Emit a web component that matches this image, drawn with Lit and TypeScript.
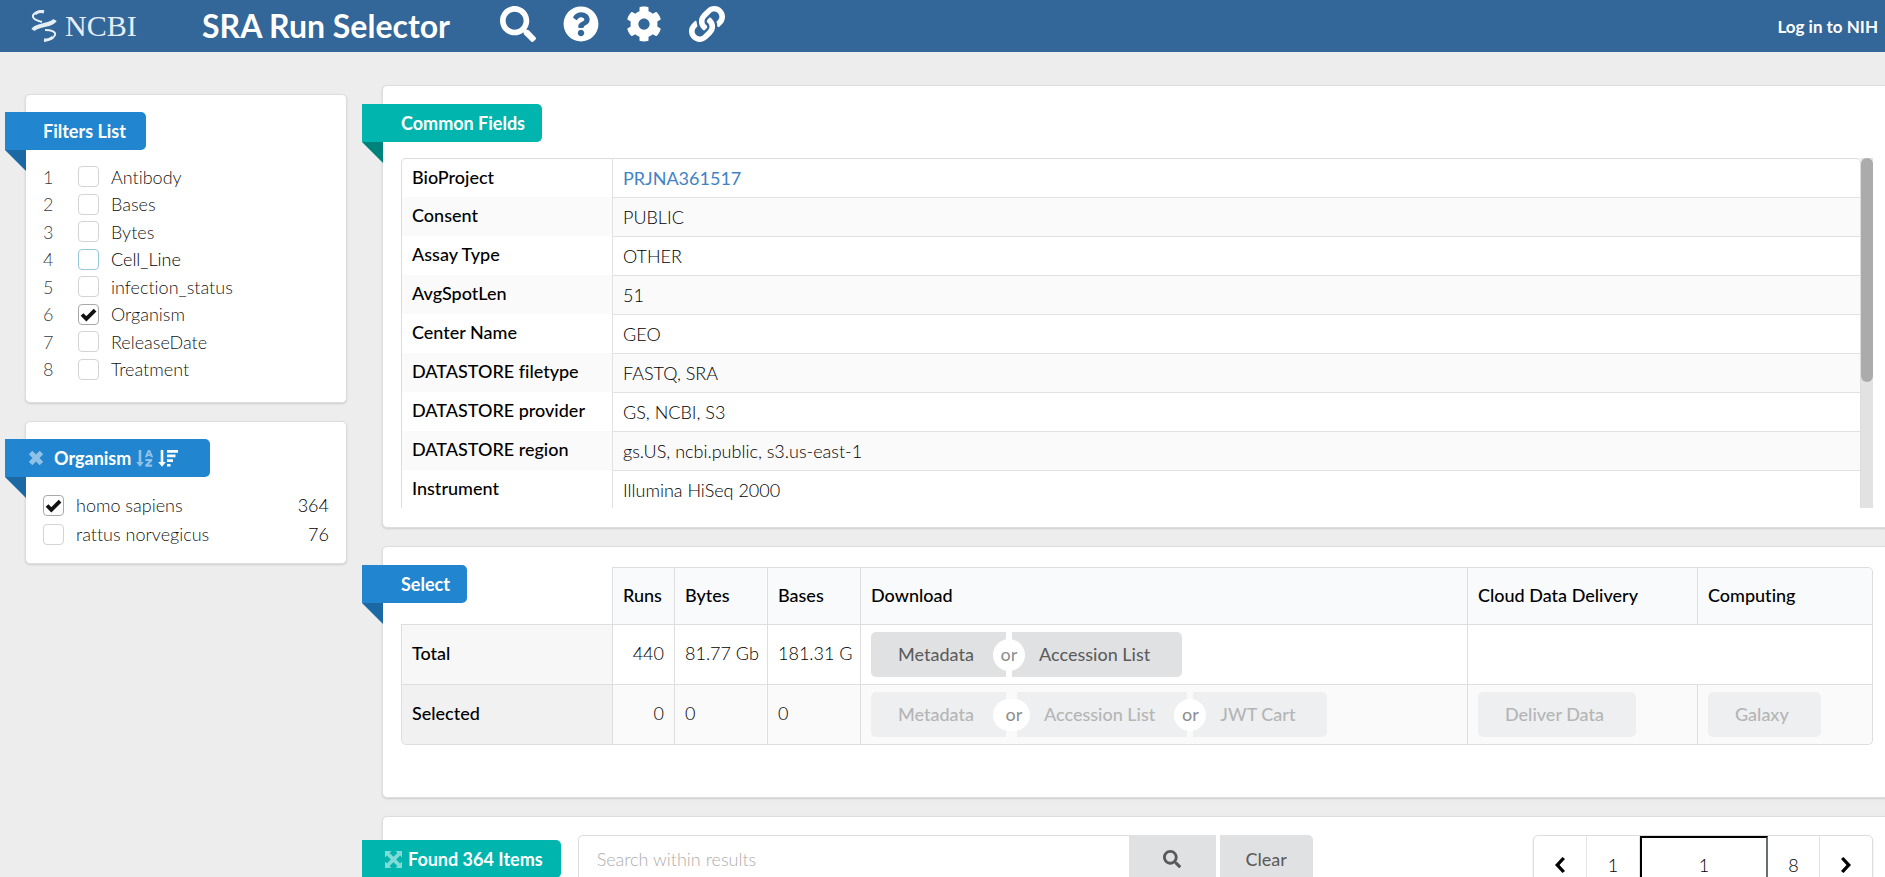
import { LitElement, html, css, svg } from "lit";
import { customElement, property } from "lit/decorators.js";

type Glyph = { box: string; d: string };

const glyphs: Record<string, Glyph> = {
  search: {
    box: "0 0 512 512",
    d: "M505 442.7L405.3 343c-4.5-4.5-10.6-7-17-7H372c27.6-35.3 44-79.7 44-128C416 93.1 322.9 0 208 0S0 93.1 0 208s93.1 208 208 208c48.3 0 92.7-16.4 128-44v16.3c0 6.4 2.5 12.5 7 17l99.7 99.7c9.4 9.4 24.6 9.4 33.9 0l28.3-28.3c9.4-9.4 9.4-24.6.1-34zM208 336c-70.7 0-128-57.2-128-128 0-70.7 57.2-128 128-128 70.7 0 128 57.2 128 128 0 70.7-57.2 128-128 128z",
  },
  help: {
    box: "0 0 512 512",
    d: "M504 256c0 136.997-111.043 248-248 248S8 392.997 8 256C8 119.083 119.043 8 256 8s248 111.083 248 248zM262.655 90c-54.497 0-89.255 22.957-116.549 63.758-3.536 5.286-2.353 12.415 2.715 16.258l34.699 26.31c5.205 3.947 12.621 3.008 16.665-2.122 17.864-22.658 30.113-35.797 57.303-35.797 20.429 0 45.698 13.148 45.698 32.958 0 14.976-12.363 22.667-32.534 33.976C247.128 238.528 216 254.941 216 296v4c0 6.627 5.373 12 12 12h56c6.627 0 12-5.373 12-12v-1.333c0-28.462 83.186-29.647 83.186-106.667 0-58.002-60.165-102-116.531-102zM256 338c-25.365 0-46 20.635-46 46 0 25.364 20.635 46 46 46s46-20.636 46-46c0-25.365-20.635-46-46-46z",
  },
  cog: {
    box: "0 0 512 512",
    d: "M487.4 315.7l-42.6-24.6c4.3-23.2 4.3-47 0-70.2l42.6-24.6c4.9-2.8 7.1-8.6 5.5-14-11.1-35.6-30-67.8-54.7-94.6-3.8-4.1-10-5.1-14.8-2.3L380.8 110c-17.9-15.4-38.5-27.3-60.8-35.1V25.8c0-5.6-3.9-10.5-9.4-11.7-36.7-8.2-74.3-7.8-109.2 0-5.5 1.2-9.4 6.1-9.4 11.7V75c-22.2 7.9-42.8 19.8-60.8 35.1L88.7 85.5c-4.9-2.8-11-1.9-14.8 2.3-24.7 26.7-43.6 58.9-54.7 94.6-1.7 5.4.6 11.2 5.5 14L67.3 221c-4.3 23.2-4.3 47 0 70.2l-42.6 24.6c-4.9 2.8-7.1 8.6-5.5 14 11.1 35.6 30 67.8 54.7 94.6 3.8 4.1 10 5.1 14.8 2.3l42.6-24.6c17.9 15.4 38.5 27.3 60.8 35.1v49.2c0 5.6 3.9 10.5 9.4 11.7 36.7 8.2 74.3 7.8 109.2 0 5.5-1.2 9.4-6.1 9.4-11.7v-49.2c22.2-7.9 42.8-19.8 60.8-35.1l42.6 24.6c4.9 2.8 11 1.9 14.8-2.3 24.7-26.7 43.6-58.9 54.7-94.6 1.5-5.5-.7-11.3-5.6-14.1zM256 336c-44.1 0-80-35.9-80-80s35.9-80 80-80 80 35.9 80 80-35.9 80-80 80z",
  },
  link: {
    box: "0 0 512 512",
    d: "M326.612 185.391c59.747 59.809 58.927 155.698.36 214.59-.11.12-.24.25-.36.37l-67.2 67.2c-59.27 59.27-155.699 59.262-214.96 0-59.27-59.26-59.27-155.7 0-214.96l37.106-37.106c9.84-9.84 26.786-3.3 27.294 10.606.648 17.722 3.826 35.527 9.69 52.721 1.986 5.822.567 12.262-3.783 16.612l-13.087 13.087c-28.026 28.026-28.905 73.66-1.155 101.96 28.024 28.579 74.086 28.749 102.325.51l67.2-67.19c28.191-28.191 28.073-73.757 0-101.83-3.701-3.694-7.429-6.564-10.341-8.569a16.037 16.037 0 0 1-6.947-12.606c-.396-10.567 3.348-21.456 11.698-29.806l21.054-21.055c5.521-5.521 14.182-6.199 20.584-1.731a152.482 152.482 0 0 1 20.522 17.197zM467.547 44.449c-59.261-59.262-155.69-59.27-214.96 0l-67.2 67.2c-.12.12-.25.25-.36.37-58.566 58.892-59.387 154.781.36 214.59a152.454 152.454 0 0 0 20.521 17.196c6.402 4.468 15.064 3.789 20.584-1.731l21.054-21.055c8.35-8.35 12.094-19.239 11.698-29.806a16.037 16.037 0 0 0-6.947-12.606c-2.912-2.005-6.64-4.875-10.341-8.569-28.073-28.073-28.191-73.639 0-101.83l67.2-67.19c28.239-28.239 74.3-28.069 102.325.51 27.75 28.3 26.872 73.934-1.155 101.96l-13.087 13.087c-4.35 4.35-5.769 10.79-3.783 16.612 5.864 17.194 9.042 34.999 9.69 52.721.509 13.906 17.454 20.446 27.294 10.606l37.106-37.106c59.271-59.259 59.271-155.699.001-214.959z",
  },
  close: {
    box: "0 0 16 16",
    d: "M4.300.800L8 4.500 11.700.800 15.200 4.300 11.500 8l3.700 3.700-3.500 3.500L8 11.500l-3.700 3.700L.8 11.700 4.500 8 .8 4.300z",
  },
  sortAlpha: {
    box: "0 0 17 17",
    d: "M2.700 0h2.600v12h2.500L4 16.700.2 12h2.500zM11.900 0h2.200L17.200 7.200h-2.400l-.4-1.100h-2.800l-.4 1.100H8.800zm.3 4.300h1.600L13 2zM9.500 9h6.700v1.900l-3.700 3.600h3.700v2.200H9.300v-2l3.700-3.600H9.500z",
  },
  sortAmount: {
    box: "0 0 20 17",
    d: "M2.700 0h2.600v12h2.500L4 16.700.2 12h2.500zM9 0h11v2.700H9zM9 4.600h8.500v2.700H9zM9 9.200h6v2.700H9zM9 13.900h3.500v2.700H9z",
  },
  expand: {
    box: "0 0 17 17",
    d: "M0 0h6.500L4.600 1.900 8.500 5.800l3.900-3.900L10.500 0H17v6.500l-1.900-1.900-3.900 3.900 3.900 3.900L17 10.500V17h-6.500l1.900-1.900-3.900-3.900-3.900 3.900L6.500 17H0v-6.500l1.900 1.900 3.900-3.900-3.900-3.900L0 6.500z",
  },
  left: { box: "0 0 10 16", d: "M7.500 0L10 2 4.500 8 10 14 7.500 16 0 8z" },
  right: { box: "0 0 10 16", d: "M2.500 0L0 2 5.500 8 0 14 2.500 16 10 8z" },
};

function icon(name: string, cls: string) {
  const g = glyphs[name];
  return html`<svg class=${cls} viewBox=${g.box} aria-hidden="true">${svg`<path fill="currentColor" d=${g.d}></path>`}</svg>`;
}

const shared = css`
  * {
    box-sizing: border-box;
  }
  button,
  input {
    font: inherit;
    color: inherit;
    margin: 0;
  }
  .card {
    background: #fff;
    border: 1px solid #dcddde;
    border-radius: 5px;
    box-shadow: 0 1px 2px rgba(34, 36, 38, 0.15);
    padding: 17px;
  }
  .tag {
    position: relative;
    display: flex;
    align-items: center;
    width: max-content;
    height: 38px;
    padding: 0 20px 0 38px;
    margin: 0 0 0 -38px;
    border-radius: 0 5px 5px 0;
    background: #2185d0;
    color: #fff;
    font-size: 18px;
    font-weight: 700;
    line-height: 22px;
  }
  .tag::after {
    content: "";
    position: absolute;
    left: 0;
    top: 100%;
    width: 21px;
    height: 21px;
    background: #1a69a4;
    clip-path: polygon(0 0, 100% 0, 100% 100%);
  }
  .tag.teal {
    background: #00b5ad;
  }
  .tag.teal::after {
    background: #00827c;
  }
`;

@customElement("check-item")
class CheckItem extends LitElement {
  @property() name = "";
  @property({ type: Boolean }) on = false;
  @property({ type: Boolean }) active = false;
  static styles = [
    shared,
    css`
      label {
        display: flex;
        align-items: center;
        gap: 12px;
        color: rgba(0, 0, 0, 0.95);
      }
      .box {
        appearance: none;
        flex: none;
        width: 21px;
        height: 21px;
        border: 1px solid #d4d4d5;
        border-radius: 4px;
        background: #fff center / 17px 17px no-repeat;
      }
      .box:checked {
        border-color: #a9a9aa;
        background-image: url("data:image/svg+xml,%3Csvg xmlns='http://www.w3.org/2000/svg' viewBox='0 0 15 15'%3E%3Cpath d='M1.800 7.500L5.600 11.300 13.300 3.600' fill='none' stroke='%23111' stroke-width='3.400'/%3E%3C/svg%3E");
      }
      .active .box {
        border-color: #96c8da;
      }
      .active {
        color: #000;
      }
    `,
  ];
  render() {
    return html`<label class=${this.active ? "active" : ""}
      ><input class="box" type="checkbox" .checked=${this.on} />${this.name}</label
    >`;
  }
}

const filters = ["Antibody", "Bases", "Bytes", "Cell_Line", "infection_status", "Organism", "ReleaseDate", "Treatment"];

const fields: [string, string][] = [
  ["BioProject", "PRJNA361517"],
  ["Consent", "PUBLIC"],
  ["Assay Type", "OTHER"],
  ["AvgSpotLen", "51"],
  ["Center Name", "GEO"],
  ["DATASTORE filetype", "FASTQ, SRA"],
  ["DATASTORE provider", "GS, NCBI, S3"],
  ["DATASTORE region", "gs.US, ncbi.public, s3.us-east-1"],
  ["Instrument", "Illumina HiSeq 2000"],
];

@customElement("app-root")
class AppRoot extends LitElement {
  static styles = [
    shared,
    css`
      :host {
        display: block;
        height: 100vh;
        overflow: hidden;
        background: #ededed;
        color: #000;
        font: 300 18px/24px Lato, "Open Sans", sans-serif;
        font-variant-ligatures: none;
      }
      .top {
        display: flex;
        align-items: center;
        height: 52px;
        padding: 0 7px 0 31px;
        background: #336699;
        color: #fff;
      }
      .logo {
        display: flex;
        align-items: center;
        gap: 8px;
        width: 171px;
        color: #e6edf4;
        font: 30px/32px "Liberation Serif", serif;
        text-decoration: none;
      }
      .helix {
        width: 26px;
        height: 32px;
      }
      .title {
        margin: 0 50px 0 0;
        font-size: 32px;
        line-height: 40px;
        font-weight: 700;
      }
      .tools {
        display: flex;
        gap: 27px;
        flex: 1;
        padding-bottom: 4px;
      }
      .tool {
        display: flex;
        padding: 0;
        border: 0;
        background: none;
      }
      .toolicon {
        width: 36px;
        height: 36px;
      }
      .login {
        color: #fff;
        padding-top: 2px;
        font-size: 17px;
        font-weight: 700;
        text-decoration: none;
      }
      .page {
        display: grid;
        grid-template-columns: 322px minmax(0, 1fr);
        gap: 35px;
        padding-left: 25px;
      }
      .side {
        display: flex;
        flex-direction: column;
        gap: 18px;
        padding-top: 42px;
      }
      .main {
        display: flex;
        flex-direction: column;
        gap: 18px;
        padding-top: 33px;
        margin-right: -6px;
      }
      .filters {
        display: grid;
        grid-auto-rows: 1fr;
        height: 220px;
        margin: 13px 0 2px;
        padding: 0;
        list-style: none;
      }
      .filter {
        display: grid;
        grid-template-columns: 35px 1fr;
        align-items: center;
      }
      .num {
        color: rgba(0, 0, 0, 0.8);
      }
      .facet {
        display: flex;
        flex-direction: column;
        gap: 5px;
        padding: 16px 0 0;
      }
      .row {
        display: flex;
        justify-content: space-between;
      }
      .tag.wide {
        padding: 0 32px 0 23px;
      }
      .small {
        width: 16px;
        height: 16px;
        margin-right: 10px;
        opacity: 0.5;
      }
      .sort {
        height: 17px;
        margin-left: 5px;
      }
      .dim {
        opacity: 0.5;
      }
      .main .card {
        padding: 18px 17px 19px 18px;
      }
      .main .tag {
        margin-left: -39px;
        padding: 0 17px 0 39px;
      }
      .scroll {
        display: flex;
        height: 350px;
        margin-top: 16px;
        overflow: hidden;
      }
      .fields {
        flex: 1;
        align-self: flex-start;
        border: 1px solid #dcddde;
        border-bottom: 0;
        border-radius: 5px 5px 0 0;
        border-spacing: 0;
      }
      .fields th {
        width: 211px;
        padding: 6px 10px 8px;
        vertical-align: top;
        text-align: left;
        font-weight: 500;
        border-right: 1px solid #e1e2e3;
      }
      .fields td {
        padding: 7px 10px;
      }
      .fields tr + tr td {
        border-top: 1px solid #e1e2e3;
      }
      .fields tr:nth-child(even) {
        background: #fafafb;
      }
      .link {
        color: #4183c4;
        font-weight: 400;
        text-decoration: none;
      }
      .track {
        width: 12px;
        background: #e2e2e2;
      }
      .thumb {
        height: 224px;
        border-radius: 6px;
        background: #ababab;
      }
      .select {
        display: grid;
        height: 252px;
        align-content: start;
      }
      .select > * {
        grid-area: 1 / 1;
      }
      .runs {
        width: 100%;
        margin-top: 2px;
        border-spacing: 0;
        table-layout: fixed;
      }
      .runs th,
      .runs td {
        height: 60px;
        padding: 0 10px 3px;
        text-align: left;
        white-space: nowrap;
        border: 0 solid #dededf;
        border-width: 0 1px 1px 0;
      }
      .runs td.act {
        padding-bottom: 0;
      }
      .runs th {
        font-weight: 500;
      }
      .runs thead th {
        height: 58px;
        background: #f9fafb;
        border-top-width: 1px;
      }
      .runs thead .blank {
        background: none;
        border-top: 0;
      }
      .runs thead th:last-child {
        border-top-right-radius: 5px;
      }
      .runs tbody th {
        border-left-width: 1px;
        background: #f7f7f7;
      }
      .runs .off th {
        background: #f1f1f1;
        border-bottom-left-radius: 5px;
      }
      .runs .off td {
        background: #fafafa;
      }
      .runs .off td:last-child {
        border-bottom-right-radius: 5px;
      }
      .runs td.right {
        text-align: right;
      }
      .c0 { width: 212px; }
      .c1 { width: 62px; }
      .c2 { width: 93px; }
      .c3 { width: 93px; }
      .c5 { width: 230px; }
      .c6 { width: 175px; }
      .group {
        display: flex;
      }
      .btn {
        height: 45px;
        padding: 0 32px 2px 27px;
        border: 0;
        border-radius: 5px;
        background: #e0e1e2;
        color: rgba(0, 0, 0, 0.6);
        font-weight: 500;
        white-space: nowrap;
      }
      .off .btn {
        background: #eeeff0;
        color: #b4b5b5;
      }
      .group .btn:not(:first-child) {
        border-top-left-radius: 0;
        border-bottom-left-radius: 0;
      }
      .group .btn:not(:last-child) {
        border-top-right-radius: 0;
        border-bottom-right-radius: 0;
      }
      .or {
        position: relative;
        display: flex;
        justify-content: center;
        align-items: center;
        align-self: center;
        z-index: 1;
        height: 32px;
        width: 32px;
        margin: 0 -13px;
        padding-bottom: 2px;
        border-radius: 16px;
        background: #fff;
        color: rgba(0, 0, 0, 0.45);
        font-weight: 500;
      }
      .or.long {
        width: 37px;
        padding-left: 5px;
      }
      .main .found {
        display: flex;
        align-items: flex-start;
        height: 120px;
      }
      .main .tag.items {
        margin-top: 5px;
        margin-right: 17px;
        padding: 0 18px 0 23px;
      }
      .grow {
        width: 17px;
        height: 17px;
        margin-right: 6px;
        opacity: 0.5;
      }
      .search {
        display: flex;
        flex: 1;
        max-width: 735px;
      }
      .field {
        flex: 1;
        min-width: 0;
        height: 48px;
        padding: 0 18px;
        border: 1px solid #dcddde;
        border-right: 0;
        border-radius: 5px 0 0 5px;
      }
      .field::placeholder {
        color: #adadad;
        opacity: 1;
      }
      .go {
        display: flex;
        align-items: center;
        justify-content: center;
        width: 87px;
        height: 48px;
        padding: 0;
        margin-right: 4px;
        border-radius: 0;
      }
      .glass {
        width: 18px;
        height: 18px;
      }
      .clear {
        width: 93px;
        height: 48px;
        padding: 0;
        border-radius: 0 5px 5px 0;
      }
      .pager {
        display: grid;
        grid-template-columns: 53px 53px 128px 52px 52px;
        height: 60px;
        margin-left: auto;
        border: 1px solid #dcddde;
        border-radius: 5px;
        box-shadow: 0 1px 2px rgba(34, 36, 38, 0.15);
      }
      .step {
        display: flex;
        align-items: center;
        justify-content: center;
        padding: 0;
        border: 0;
        border-right: 1px solid #e4e4e5;
        background: none;
      }
      .step:last-child {
        border-right: 0;
      }
      .now {
        min-width: 0;
        border: 2px inset #1b1c1d;
        border-radius: 0;
        text-align: center;
      }
      .arrow {
        height: 16px;
      }
    `,
  ];

  render() {
    return html`
      <header class="top">
        <a class="logo" href="#">
          <svg class="helix" viewBox="0 0 26 32" aria-hidden="true" fill="none" stroke="currentColor">
            <path stroke-width="2" d="M13 1C6 1 1 4 2 7s5 4 9 5M14 20c7 0 11 2 10 5s-6 5-11 6"></path>
            <path stroke-width="4" d="M24 10C21 16 6 14 2 20"></path>
            <path stroke-width="3" d="M4 4c3-3 6-3 9-2M22 27c-3 3-6 3-9 3"></path>
          </svg>
          NCBI
        </a>
        <h1 class="title">SRA Run Selector</h1>
        <nav class="tools">
          ${["search", "help", "cog", "link"].map(
            (n) => html`<button class="tool" aria-label=${n}>${icon(n, "toolicon")}</button>`
          )}
        </nav>
        <a class="login" href="#">Log in to NIH</a>
      </header>
      <div class="page">
        <aside class="side">
          <section class="card">
            <h2 class="tag">Filters List</h2>
            <ol class="filters">
              ${filters.map(
                (f, i) => html`<li class="filter">
                  <span class="num">${i + 1}</span>
                  <check-item name=${f} ?on=${f === "Organism"} ?active=${f === "Cell_Line"}></check-item>
                </li>`
              )}
            </ol>
          </section>
          <section class="card">
            <h2 class="tag wide">
              ${icon("close", "small")}Organism${icon("sortAlpha", "sort dim")}${icon("sortAmount", "sort")}
            </h2>
            <div class="facet">
              <div class="row"><check-item name="homo sapiens" on></check-item><span>364</span></div>
              <div class="row"><check-item name="rattus norvegicus"></check-item><span>76</span></div>
            </div>
          </section>
        </aside>
        <main class="main">
          <section class="card">
            <h2 class="tag teal">Common Fields</h2>
            <div class="scroll">
              <table class="fields">
                ${fields.map(
                  ([k, v], i) => html`<tr>
                    <th scope="row">${k}</th>
                    <td>${i ? v : html`<a class="link" href="#">${v}</a>`}</td>
                  </tr>`
                )}
              </table>
              <div class="track"><div class="thumb"></div></div>
            </div>
          </section>
          <section class="card select">
            <table class="runs">
              <colgroup>
                <col class="c0" /><col class="c1" /><col class="c2" /><col class="c3" /><col /><col class="c5" /><col class="c6" />
              </colgroup>
              <thead>
                <tr>
                  <th class="blank"></th>
                  <th>Runs</th>
                  <th>Bytes</th>
                  <th>Bases</th>
                  <th>Download</th>
                  <th>Cloud Data Delivery</th>
                  <th>Computing</th>
                </tr>
              </thead>
              <tbody>
                <tr>
                  <th scope="row">Total</th>
                  <td class="right">440</td>
                  <td>81.77 Gb</td>
                  <td>181.31 G</td>
                  <td class="act">
                    <div class="group">
                      <button class="btn">Metadata</button><span class="or">or</span
                      ><button class="btn">Accession List</button>
                    </div>
                  </td>
                  <td colspan="2"></td>
                </tr>
                <tr class="off">
                  <th scope="row">Selected</th>
                  <td class="right">0</td>
                  <td>0</td>
                  <td>0</td>
                  <td class="act">
                    <div class="group">
                      <button class="btn" disabled>Metadata</button><span class="or long">or</span
                      ><button class="btn" disabled>Accession List</button><span class="or">or</span
                      ><button class="btn" disabled>JWT Cart</button>
                    </div>
                  </td>
                  <td class="act"><button class="btn" disabled>Deliver Data</button></td>
                  <td class="act"><button class="btn" disabled>Galaxy</button></td>
                </tr>
              </tbody>
            </table>
            <h2 class="tag">Select</h2>
          </section>
          <section class="card found">
            <h2 class="tag teal items">${icon("expand", "grow")}Found 364 Items</h2>
            <form class="search" role="search">
              <input class="field" type="text" placeholder="Search within results" aria-label="Search within results" />
              <button class="btn go" type="button" aria-label="Search">${icon("search", "glass")}</button>
              <button class="btn clear" type="button">Clear</button>
            </form>
            <nav class="pager" aria-label="Pages">
              <button class="step" aria-label="Previous page">${icon("left", "arrow")}</button>
              <button class="step">1</button>
              <input class="now" type="text" aria-label="Page number" value="1" />
              <button class="step">8</button>
              <button class="step" aria-label="Next page">${icon("right", "arrow")}</button>
            </nav>
          </section>
        </main>
      </div>
    `;
  }
}
